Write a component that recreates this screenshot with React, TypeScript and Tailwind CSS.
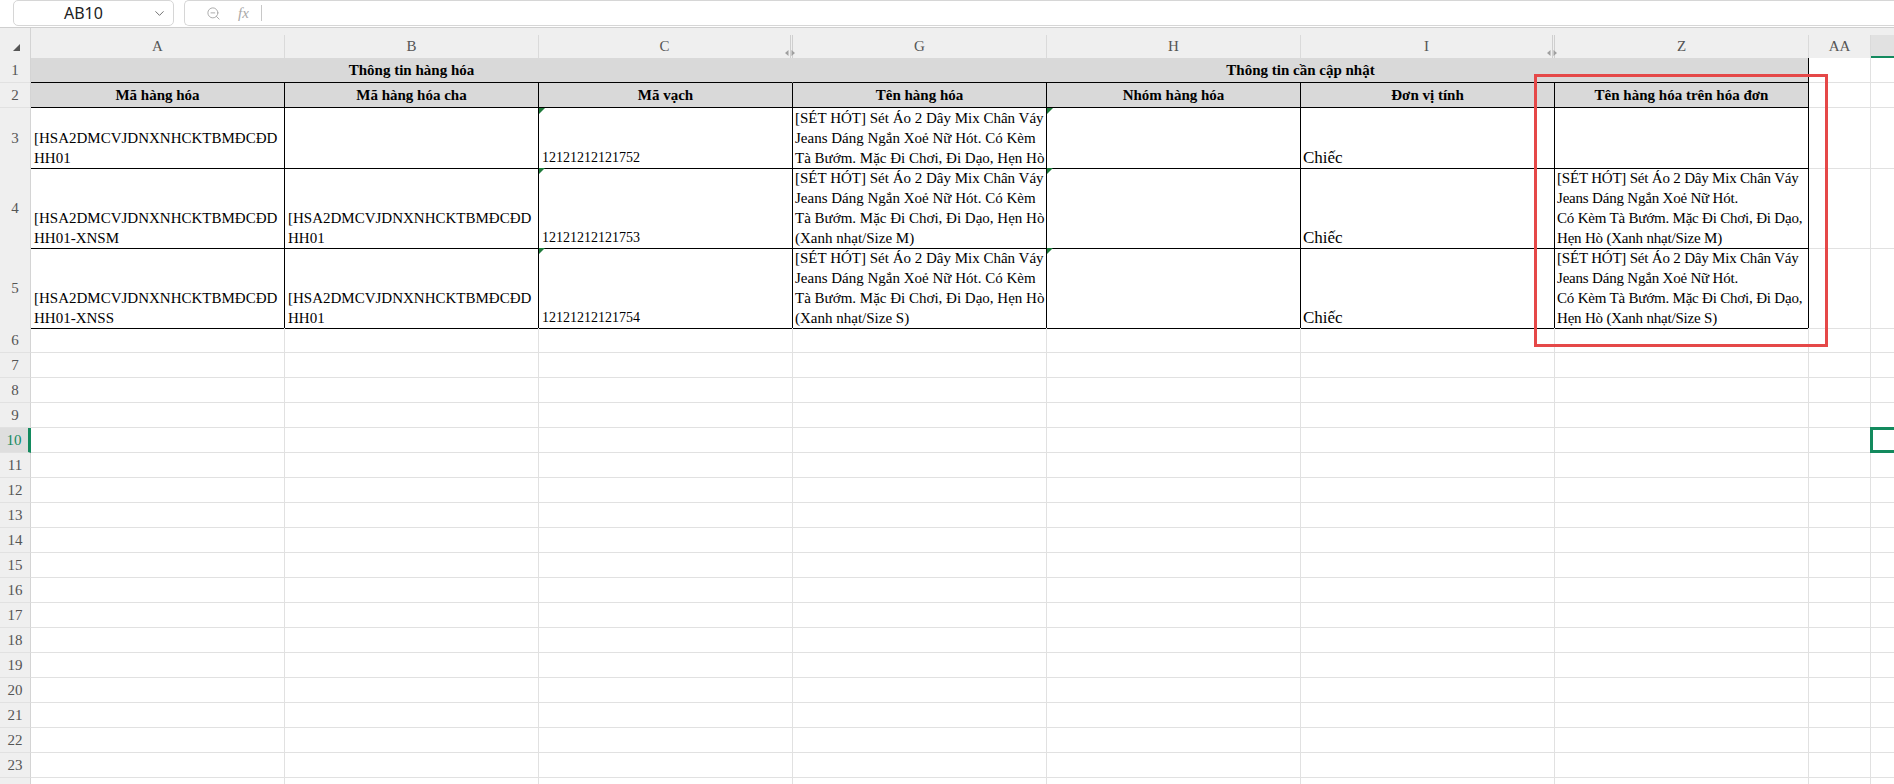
import { ChevronDown, ZoomOut } from 'lucide-react'

// sheet columns as they show on screen (D-F and J-Y are hidden)
const COLS = ['A', 'B', 'C', 'G', 'H', 'I', 'Z', 'AA', 'AB']
const GRID = 'grid grid-cols-[31px_repeat(7,254px)_62px_254px]'

const CODE = '[HSA2DMCVJDNXNHCKTBMĐCĐD'
const NAME_G = [
  '[SÉT HÓT] Sét Áo 2 Dây Mix Chân Váy',
  'Jeans Dáng Ngắn Xoẻ Nữ Hót. Có Kèm',
  'Tà Bướm. Mặc Đi Chơi, Đi Dạo, Hẹn Hò',
]
const nameZ = (size: string) => [
  '[SÉT HÓT] Sét Áo 2 Dây Mix Chân Váy',
  'Jeans Dáng Ngắn Xoẻ Nữ Hót.',
  'Có Kèm Tà Bướm. Mặc Đi Chơi, Đi Dạo,',
  `Hẹn Hò (Xanh nhạt/Size ${size})`,
]

type Row = {
  n: number
  h: string
  a: string[]
  b: string[]
  c: string
  g: string[]
  z: string[]
}

const DATA: Row[] = [
  { n: 3, h: 'h-[60px]', a: [CODE, 'HH01'], b: [], c: '12121212121752', g: NAME_G, z: [] },
  { n: 4, h: 'h-[80px]', a: [CODE, 'HH01-XNSM'], b: [CODE, 'HH01'], c: '12121212121753', g: [...NAME_G, '(Xanh nhạt/Size M)'], z: nameZ('M') },
  { n: 5, h: 'h-[80px]', a: [CODE, 'HH01-XNSS'], b: [CODE, 'HH01'], c: '12121212121754', g: [...NAME_G, '(Xanh nhạt/Size S)'], z: nameZ('S') },
]

function RowHead({ n, selected }: { n?: number; selected?: boolean }) {
  return (
    <div
      className={
        selected
          ? 'flex items-center justify-center border-b border-b-[#e1e1e1] border-r-[3px] border-r-[#138a5e] bg-[#dedede] text-[#138a5e]'
          : 'flex items-center justify-center border-b border-b-[#e1e1e1] border-r border-r-[#d4d4d4] bg-[#efefef] text-[#555]'
      }
    >
      {n}
    </div>
  )
}

function Lines({ lines, className = '' }: { lines: string[]; className?: string }) {
  return (
    <div className={`flex h-full flex-col justify-end overflow-hidden whitespace-nowrap px-[3px] ${className}`}>
      {lines.map((l, i) => (
        <div key={i} className="leading-[20px]">{l}</div>
      ))}
    </div>
  )
}

function Flag() {
  return <div className="absolute left-0 top-0 h-0 w-0 border-r-[6px] border-t-[6px] border-r-transparent border-t-[#1f7a3a]" />
}

const black = 'border-b border-r border-black'
const light = 'border-b border-r border-[#e1e1e1]'

function HiddenMark() {
  return (
    <svg className="absolute -right-[6px] bottom-[1px]" width="12" height="8" viewBox="0 0 12 8">
      <path d="M4.5 1 L1 4 L4.5 7 Z M7.5 1 L11 4 L7.5 7 Z" fill="#a0a0a0" />
    </svg>
  )
}

export default function App() {
  return (
    <div className="relative h-[784px] w-[1894px] overflow-hidden bg-white font-['Liberation_Serif',serif] text-[15px] text-black">
      {/* --- toolbar: name box + formula bar --- */}
      <div className="flex h-[28px] items-start gap-[10px] border-b border-[#cfcfcf] pl-[13px]">
        <div className="flex h-[26px] w-[161px] items-center rounded-[5px] border border-[#d6d6d6] pl-[50px] pr-[6px] font-['Noto_Sans',sans-serif] text-[16px] text-[#222]">
          <span className="flex-1 text-left">AB10</span>
          <ChevronDown size={15} strokeWidth={1.5} className="text-[#666]" />
        </div>
        <div className="flex h-[26px] flex-1 items-center rounded-l-[5px] border border-r-0 border-[#d6d6d6] pl-[21px]">
          <ZoomOut size={15} strokeWidth={1.5} className="text-[#a8a8a8]" />
          <span className="ml-[17px] font-['Liberation_Serif',serif] text-[15px] italic text-[#a8a8a8]">fx</span>
          <div className="ml-[12px] h-[16px] w-px bg-[#c8c8c8]" />
        </div>
      </div>

      {/* --- column letters --- */}
      <div className={`${GRID} h-[30px] bg-[#efefef] text-[#555]`}>
        <div className="relative border-r border-[#d4d4d4]">
          <svg className="absolute left-[13px] top-[16px]" width="8" height="8" viewBox="0 0 8 8">
            <path d="M7 0 L7 7 L0 7 Z" fill="#555" />
          </svg>
        </div>
        {COLS.map((c) => (
          <div
            key={c}
            className={c === 'AB' ? 'mt-[7px] flex items-center border-b-2 border-[#138a5e] bg-[#e1e1e1] pl-[5px]' : 'pt-[7px]'}
          >
            {c !== 'AB' && (
              <div
                className={`relative flex h-full items-center justify-center ${
                  c === 'C' || c === 'I' ? 'border-r-[3px] border-double border-[#cfcfcf]' : 'border-r border-[#dadada]'
                }`}
              >
                {c}
                {(c === 'C' || c === 'I') && <HiddenMark />}
              </div>
            )}
          </div>
        ))}
      </div>

      {/* --- row 1: group titles --- */}
      <div className={`${GRID} h-[25px]`}>
        <RowHead n={1} />
        <div className="col-span-3 flex items-center justify-center border-b border-r border-b-black border-r-[#d9d9d9] bg-[#d9d9d9] font-bold">
          Thông tin hàng hóa
        </div>
        <div className={`col-span-4 flex items-center justify-center bg-[#d9d9d9] font-bold ${black}`}>
          Thông tin cần cập nhật
        </div>
        <div className={light} />
        <div className={light} />
      </div>

      {/* --- row 2: field titles --- */}
      <div className={`${GRID} h-[25px]`}>
        <RowHead n={2} />
        {['Mã hàng hóa', 'Mã hàng hóa cha', 'Mã vạch', 'Tên hàng hóa', 'Nhóm hàng hóa', 'Đơn vị tính', 'Tên hàng hóa trên hóa đơn'].map((t) => (
          <div key={t} className={`flex items-center justify-center bg-[#d9d9d9] font-bold ${black}`}>
            {t}
          </div>
        ))}
        <div className={light} />
        <div className={light} />
      </div>

      {/* --- rows 3-5: product data --- */}
      {DATA.map((r) => (
        <div key={r.n} className={`${GRID} ${r.h}`}>
          <RowHead n={r.n} />
          <div className={black}><Lines lines={r.a} /></div>
          <div className={black}><Lines lines={r.b} /></div>
          <div className={`relative ${black}`}>
            <Flag />
            <Lines lines={[r.c]} className="text-[14px]" />
          </div>
          <div className={black}><Lines lines={r.g} className="pl-[2px]" /></div>
          <div className={`relative ${black}`}><Flag /></div>
          <div className={black}><Lines lines={['Chiếc']} className="pl-[2px] text-[17px]" /></div>
          <div className={black}><Lines lines={r.z} className="pl-[2px] pr-0 tracking-[-0.2px]" /></div>
          <div className={light} />
          <div className={light} />
        </div>
      ))}

      {/* --- empty rows (24 only peeks in at the bottom edge) --- */}
      {Array.from({ length: 19 }, (_, i) => i + 6).map((n) => (
        <div key={n} className={`${GRID} h-[25px]`}>
          <RowHead n={n < 24 ? n : undefined} selected={n === 10} />
          {COLS.map((c) => (
            <div key={c} className={`relative ${light}`}>
              {n === 10 && c === 'AB' && (
                <div className="absolute -left-px -top-px h-[26px] w-[120px] border-[3px] border-[#138a5e]" />
              )}
            </div>
          ))}
        </div>
      ))}

      {/* --- red annotation box --- */}
      <div className="pointer-events-none absolute left-[1534px] top-[74px] h-[273px] w-[294px] border-[3px] border-[#e54848]" />
    </div>
  )
}
